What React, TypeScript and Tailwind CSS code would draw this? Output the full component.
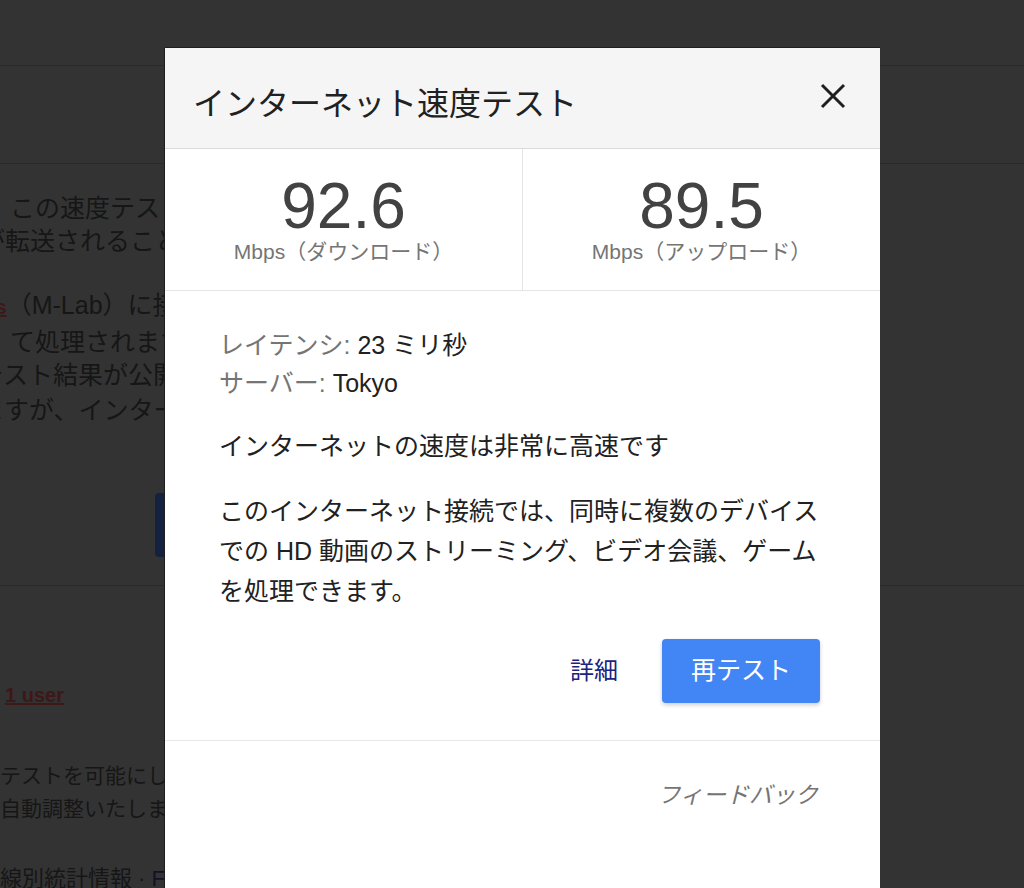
import React from "react";

const F = "font-['Liberation_Sans','Noto_Sans_CJK_JP',sans-serif]";

function BgPage() {
  return (
    <div className="flex flex-col w-[1024px] text-[#161616] text-[25px] leading-[33px]">
      <div className="h-[65px]" />
      <div className="h-px bg-[#2a2a2a]" />
      <div className="h-[97px]" />
      <div className="h-px bg-[#2a2a2a]" />
      <div className="h-[28px]" />
      <div className="whitespace-nowrap ml-[10px]">この速度テストでは、</div>
      <div className="whitespace-nowrap ml-[-20px]">が転送されることになります</div>
      <div className="h-[31px]" />
      <div className="whitespace-nowrap ml-[-40px]">
        <span className="text-[#3e1717] font-bold underline decoration-2 text-[20px]">Labs</span>
        <span>（M-Lab）に接続</span>
      </div>
      <div className="whitespace-nowrap ml-[10px] mt-[2px]">て処理されます</div>
      <div className="whitespace-nowrap ml-[-22px]">テスト結果が公開</div>
      <div className="whitespace-nowrap ml-[-21px] mt-[2px]">ますが、インター</div>
      <div className="h-[66px]" />
      <div className="flex">
        <div className="w-[155px]" />
        <div className="w-[120px] h-[64px] rounded-[4px] bg-[#142240]" />
      </div>
      <div className="h-[28px]" />
      <div className="h-px bg-[#2a2a2a]" />
      <div className="h-[96px]" />
      <div className="whitespace-nowrap ml-[5px] text-[20px] leading-[26px] font-bold text-[#3e1717] underline decoration-2">
        1 user
      </div>
      <div className="h-[51px]" />
      <div className="whitespace-nowrap ml-[0px] text-[21px]">テストを可能にします</div>
      <div className="whitespace-nowrap ml-[0px] text-[21px]">自動調整いたします</div>
      <div className="h-[37px]" />
      <div className="whitespace-nowrap ml-[0px] text-[22px]">
        線別統計情報 · <span className="text-[#121226]">F</span>
      </div>
    </div>
  );
}

function Dialog() {
  return (
    <div className="absolute left-[165px] top-[48px] w-[715px] h-[860px] bg-white shadow-[-1px_0_0_#1e1e1e,0_-1px_0_#1e1e1e] flex flex-col">
      <div className="h-[101px] bg-[#f5f5f5] border-b border-[#dadada] flex items-center justify-between pl-[28px] pr-[34px]">
        <div className="text-[32px] leading-[40px] text-[#212121] mt-[11px]">
          インターネット速度テスト
        </div>
        <svg width="26" height="26" viewBox="0 0 26 26" className="mt-[-5px]">
          <path d="M2 2 L24 24 M24 2 L2 24" stroke="#1f1f1f" strokeWidth="3" fill="none" />
        </svg>
      </div>
      <div className="h-[142px] border-b border-[#e4e4e4] flex">
        <div className="flex-1 border-r border-[#e4e4e4] flex flex-col items-center pt-[25px]">
          <div className="text-[64px] leading-[64px] text-[#424242]">92.6</div>
          <div className="text-[21px] leading-[24px] mt-[2px] text-[#757575]">Mbps（ダウンロード）</div>
        </div>
        <div className="flex-1 flex flex-col items-center pt-[25px]">
          <div className="text-[64px] leading-[64px] text-[#424242]">89.5</div>
          <div className="text-[21px] leading-[24px] mt-[2px] text-[#757575]">Mbps（アップロード）</div>
        </div>
      </div>
      <div className="flex flex-col pl-[54px] pr-[60px] pt-[35px] pb-[37px] border-b border-[#e8e8e8] text-[25px] text-[#212121]">
        <div className="leading-[38px]">
          <span className="text-[#757575]">レイテンシ: </span>23 ミリ秒
        </div>
        <div className="leading-[38px]">
          <span className="text-[#757575]">サーバー: </span>Tokyo
        </div>
        <div className="leading-[40px] mt-[24px]">インターネットの速度は非常に高速です</div>
        <div className="leading-[40px] mt-[25px]">
          このインターネット接続では、同時に複数のデバイス
          <br />
          での HD 動画のストリーミング、ビデオ会議、ゲーム
          <br />
          を処理できます。
        </div>
        <div className="flex justify-end items-center mt-[28px] gap-[44px]">
          <div className="text-[#1a237e] text-[24px] leading-[32px]">詳細</div>
          <div className="w-[158px] h-[64px] rounded-[4px] bg-[#4285f4] text-white text-[25px] flex items-center justify-center shadow-[0_2px_4px_rgba(0,0,0,0.2)]">
            再テスト
          </div>
        </div>
      </div>
      <div className="flex justify-end pr-[60px] pt-[38px]">
        <div className="italic text-[23px] leading-[32px] text-[#757575] mr-[2px]">フィードバック</div>
      </div>
    </div>
  );
}

export default function App() {
  return (
    <div className={`${F} relative w-[1024px] h-[888px] overflow-hidden bg-[#333333]`}>
      <BgPage />
      <Dialog />
    </div>
  );
}
